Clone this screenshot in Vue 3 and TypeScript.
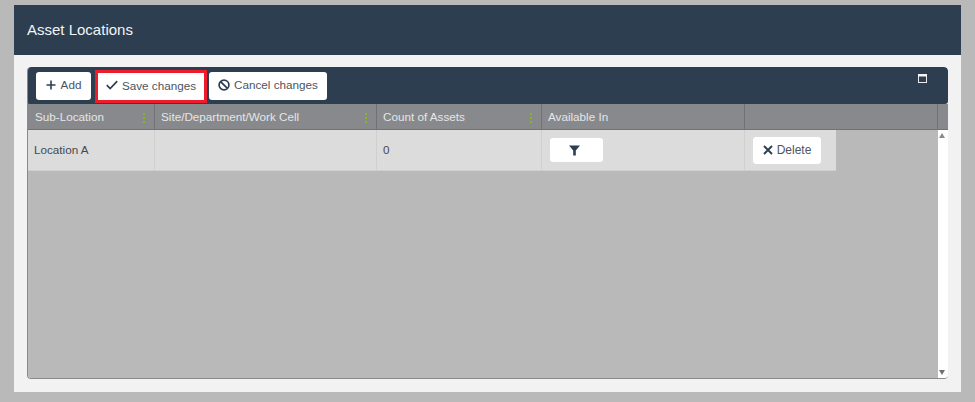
<script setup lang="ts">
const headers = [
  { label: 'Sub-Location', grip: true },
  { label: 'Site/Department/Work Cell', grip: true },
  { label: 'Count of Assets', grip: true },
  { label: 'Available In', grip: false },
  { label: '', grip: false },
]
</script>

<template>
  <div class="page">
    <div class="card">
      <div class="title">Asset Locations</div>
      <div class="body">
        <div class="grid">
          <div class="toolbar">
            <button class="btn add">
              <svg width="10" height="10" viewBox="0 0 10 10"><path d="M5 .5v9M.5 5h9" stroke="#2c3e50" stroke-width="1.6" fill="none" /></svg>
              Add
            </button>
            <div class="highlight">
              <button class="btn save">
                <svg width="12" height="10" viewBox="0 0 12 10"><path d="M.8 5.2 4.2 8.6 11.2 1.2" stroke="#2c3e50" stroke-width="1.7" fill="none" /></svg>
                Save changes
              </button>
            </div>
            <button class="btn cancel">
              <svg width="12" height="12" viewBox="0 0 12 12"><circle cx="6" cy="6" r="4.9" stroke="#2c3e50" stroke-width="1.7" fill="none" /><path d="M2.6 2.6 9.4 9.4" stroke="#2c3e50" stroke-width="1.7" /></svg>
              Cancel changes
            </button>
            <svg class="maximize" width="9" height="9" viewBox="0 0 9 9"><rect x=".5" y=".5" width="8" height="8" fill="none" stroke="#e8eaf0" /><rect x="0" y="0" width="9" height="2.5" fill="#f4f4f4" /></svg>
          </div>
          <div class="head">
            <div v-for="h in headers" :key="h.label" class="hcell">
              <span>{{ h.label }}</span>
              <i v-if="h.grip" class="grip"></i>
            </div>
            <div class="hscroll"></div>
          </div>
          <div class="content">
            <div class="rows">
              <div class="row">
                <div class="cell c1">Location A</div>
                <div class="cell c2"></div>
                <div class="cell c3">0</div>
                <div class="cell c4">
                  <button class="btn filter">
                    <svg width="11" height="11" viewBox="0 0 11 11"><path d="M0 .5h11L6.8 5.4V10.5H4.2V5.4Z" fill="#2c3e50" /></svg>
                  </button>
                </div>
                <div class="cell c5">
                  <button class="btn del">
                    <svg width="10" height="10" viewBox="0 0 10 10"><path d="M1 1 9 9M9 1 1 9" stroke="#2c3e50" stroke-width="1.9" /></svg>
                    Delete
                  </button>
                </div>
              </div>
            </div>
            <div class="scrollbar">
              <i class="up"></i>
              <i class="down"></i>
            </div>
          </div>
        </div>
      </div>
    </div>
  </div>
</template>

<style scoped>
.page {
  width: 975px;
  height: 402px;
  box-sizing: border-box;
  padding: 5px 14px 10px;
  background: #b9b9b9;
  font-family: "Liberation Sans", Arial, sans-serif;
  overflow: hidden;
}
.card {
  height: 387px;
  display: flex;
  flex-direction: column;
  background: #f2f2f2;
}
.title {
  height: 50px;
  flex: none;
  box-sizing: border-box;
  padding: 0 0 2px 13px;
  display: flex;
  align-items: center;
  background: #2c3e50;
  color: #f2f4f6;
  font-size: 15px;
}
.body {
  flex: 1;
  min-height: 0;
  padding: 12px 13px 13px;
  display: flex;
}
.grid {
  flex: 1;
  display: flex;
  flex-direction: column;
  border-radius: 4px;
  overflow: hidden;
  border-bottom: 1px solid #888a8c;
  border-left: 1px solid #888a8c;
  box-sizing: border-box;
}
.toolbar {
  height: 37px;
  flex: none;
  margin-left: -1px;
  box-sizing: border-box;
  padding: 5px 0 0 9px;
  display: flex;
  align-items: flex-start;
  position: relative;
  background: #2c3e50;
  border-radius: 4px 4px 3px 3px;
}
.btn {
  border: 0;
  background: #fff;
  border-radius: 3px;
  padding: 0 0 3px;
  display: flex;
  align-items: center;
  justify-content: center;
  gap: 4px;
  font: 11.7px "Liberation Sans", Arial, sans-serif;
  color: #4c5560;
}
.add {
  width: 55px;
  height: 28px;
  gap: 5px;
}
.highlight {
  margin: -2px 0 0 4px;
  border: 3px solid #ed1c2a;
  flex: none;
  display: flex;
}
.save {
  width: 106px;
  height: 27px;
  border-radius: 0;
}
.cancel {
  width: 118px;
  height: 28px;
  margin-left: 2px;
}
.maximize {
  position: absolute;
  top: 7px;
  right: 21px;
}
.head {
  height: 26px;
  flex: none;
  display: grid;
  grid-template-columns: 127px 222px 165px 203px 193px 1fr;
  background: #88898c;
  border-bottom: 1px solid #6f7377;
  box-sizing: border-box;
}
.hcell {
  position: relative;
  box-sizing: border-box;
  padding-left: 7px;
  display: flex;
  align-items: center;
  border-right: 1px solid #6f7377;
  color: #e4e6e8;
  font-size: 11.7px;
}
.hcell:nth-child(n + 2) {
  padding-left: 6px;
}
.grip {
  position: absolute;
  right: 9px;
  top: 9px;
  width: 2px;
  height: 2px;
  background: #84b91c;
  box-shadow: 0 4px 0 #84b91c, 0 8px 0 #84b91c;
}
.content {
  flex: 1;
  min-height: 0;
  display: flex;
  background: #b9b9b9;
}
.rows {
  flex: 1;
}
.row {
  width: 808px;
  height: 41px;
  display: grid;
  grid-template-columns: 127px 222px 165px 203px 91px;
  background: #dcdcdc;
  border-bottom: 1px solid #d0d0d0;
  box-sizing: border-box;
}
.cell {
  box-sizing: border-box;
  display: flex;
  align-items: center;
  padding: 0 0 1px 6px;
  border-right: 1px solid #cfcfcf;
  color: #444a50;
  font-size: 11.7px;
}
.c4 {
  padding: 0 0 0 8px;
}
.c5 {
  padding: 0 0 0 8px;
  border-right: 0;
}
.filter {
  width: 53px;
  height: 24px;
  padding: 0 4px 0 0;
}
.del {
  width: 68px;
  height: 27px;
  gap: 4px;
  padding-bottom: 1px;
  font-size: 12px;
}
.scrollbar {
  width: 10px;
  flex: none;
  position: relative;
  background: #fff;
}
.up,
.down {
  position: absolute;
  left: 1px;
  width: 0;
  height: 0;
  border-left: 3.5px solid transparent;
  border-right: 3.5px solid transparent;
}
.up {
  top: 3px;
  border-bottom: 5px solid #8a8a8a;
}
.down {
  bottom: 3px;
  border-top: 5px solid #707070;
}
</style>
